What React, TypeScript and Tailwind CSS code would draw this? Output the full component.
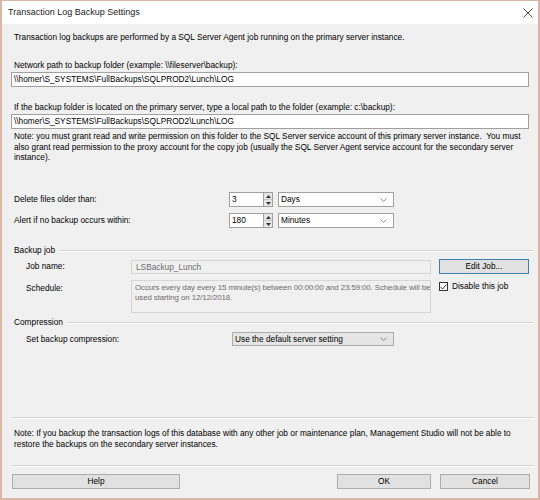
import React from "react";

const font = { fontFamily: '"Liberation Sans", Arial, sans-serif' };

function Chevron() {
    return (
        <svg width="7" height="4" viewBox="0 0 7 4" className="shrink-0">
            <polyline points="0.5,0.5 3.5,3.5 6.5,0.5" fill="none" stroke="#666" strokeWidth="0.7" />
        </svg>
    );
}

function Select({ value, className, grey }: { value: string; className: string; grey?: boolean }) {
    return (
        <div
            className={`${className} flex items-center justify-between border pl-[2px] pr-[6px] ${
                grey ? "bg-[#e5e5e5] border-[#acacac]" : "bg-white border-[#a0a0a0]"
            }`}
        >
            <span>{value}</span>
            <Chevron />
        </div>
    );
}

function Spin({ value }: { value: string }) {
    return (
        <div className="flex h-full w-[44px]">
            <div className="flex-1 bg-white border border-[#a0a0a0] border-r-0 pl-[2px] flex items-center">{value}</div>
            <div className="w-[10px] flex flex-col border border-[#a0a0a0] bg-[#f0f0f0]">
                <div className="flex-1 flex items-center justify-center border-b border-[#c8c8c8] bg-[#e6e6e6]">
                    <svg width="5" height="3" viewBox="0 0 5 3">
                        <polygon points="0,3 2.5,0 5,3" fill="#333" />
                    </svg>
                </div>
                <div className="flex-1 flex items-center justify-center bg-[#e6e6e6]">
                    <svg width="5" height="3" viewBox="0 0 5 3">
                        <polygon points="0,0 2.5,3 5,0" fill="#333" />
                    </svg>
                </div>
            </div>
        </div>
    );
}

function GroupHeader({ title }: { title: string }) {
    return (
        <div className="flex items-center h-[11px] ml-[3px] -mr-[5px]">
            <span className="leading-[11px]">{title}</span>
            <div className="flex-1 ml-[4px] h-[2px] border-t border-[#d5d5d5] border-b border-b-white" />
        </div>
    );
}

function Button({ label, className }: { label: string; className: string }) {
    return (
        <div className={`${className} h-[15px] flex items-center justify-center bg-[#e1e1e1] border border-[#adadad]`}>
            {label}
        </div>
    );
}

export default function App() {
    return (
        <div
            style={font}
            className="w-[540px] h-[500px] border-x-2 border-t border-b-2 border-[#dcb6a4] bg-[#f0f0f0] text-[8.3px] text-black flex flex-col overflow-hidden"
        >
            {/* title bar */}
            <div className="h-[23px] bg-white flex items-center justify-between pl-[6px] pr-[5px] shrink-0">
                <span className="text-[9px] text-[#222]">Transaction Log Backup Settings</span>
                <svg width="10" height="10" viewBox="0 0 10 10">
                    <path d="M0.5 0.5 L9.5 9.5 M9.5 0.5 L0.5 9.5" stroke="#333" strokeWidth="0.9" />
                </svg>
            </div>

            <div className="flex flex-col pl-[9px] pr-[9px]">
                <div className="mt-[8px] ml-[3px] leading-[11px]">
                    Transaction log backups are performed by a SQL Server Agent job running on the primary server instance.
                </div>

                <div className="mt-[17px] ml-[3px] leading-[11px]">Network path to backup folder (example: \\fileserver\backup):</div>
                <div className="mt-[1px] h-[15px] bg-white border border-[#a0a0a0] pl-[2px] flex items-center">
                    \\homer\S_SYSTEMS\FullBackups\SQLPROD2\Lunch\LOG
                </div>

                <div className="mt-[15px] ml-[3px] leading-[11px]">
                    If the backup folder is located on the primary server, type a local path to the folder (example: c:\backup):
                </div>
                <div className="mt-[1px] h-[15px] bg-white border border-[#a0a0a0] pl-[2px] flex items-center">
                    \\homer\S_SYSTEMS\FullBackups\SQLPROD2\Lunch\LOG
                </div>

                <div className="mt-[2px] ml-[3px] h-[32px] leading-[10.5px] pr-[4px]">
                    Note: you must grant read and write permission on this folder to the SQL Server service account of this primary server instance.&nbsp; You must also grant read permission to the proxy account for the copy job (usually the SQL Server Agent service account for the secondary server instance).
                </div>

                {/* retention */}
                <div className="mt-[29px] h-[15px] flex items-center">
                    <span className="ml-[3px] w-[215px]">Delete files older than:</span>
                    <Spin value="3" />
                    <Select value="Days" className="ml-[5px] w-[116px] h-full" />
                </div>
                <div className="mt-[6px] h-[15px] flex items-center">
                    <span className="ml-[3px] w-[215px]">Alert if no backup occurs within:</span>
                    <Spin value="180" />
                    <Select value="Minutes" className="ml-[5px] w-[116px] h-full" />
                </div>

                {/* backup job */}
                <div className="mt-[17px]">
                    <GroupHeader title="Backup job" />
                </div>
                <div className="mt-[3px] h-[15px] flex">
                    <span className="ml-[15px] w-[105px] flex items-center">Job name:</span>
                    <div className="mt-[1px] w-[300px] h-[14px] border border-[#d6d6d6] pl-[4px] flex items-center text-[#6d6d6d]">
                        LSBackup_Lunch
                    </div>
                    <div className="ml-[8px] flex-1 h-[15px] flex items-center justify-center bg-[#e1e1e1] border border-[#3f7fae]">
                        Edit Job...
                    </div>
                </div>
                <div className="mt-[6px] flex">
                    <span className="ml-[15px] w-[105px] mt-[3px] leading-[11px]">Schedule:</span>
                    <div className="w-[300px] h-[33px] border border-[#d6d6d6] pl-[3px] pt-[2px] text-[7.9px] leading-[10px] tracking-[-0.1px] whitespace-nowrap text-[#6d6d6d]">
                        Occurs every day every 15 minute(s) between 00:00:00 and 23:59:00. Schedule will be
                        <br />
                        used starting on 12/12/2018.
                    </div>
                    <div className="ml-[8px] mt-[2px] flex items-start gap-[4px]">
                        <div className="w-[9px] h-[9px] bg-white border border-[#333] flex items-center justify-center">
                            <svg width="7" height="6" viewBox="0 0 7 6">
                                <polyline points="0.6,3 2.6,5 6.4,0.6" fill="none" stroke="#222" strokeWidth="0.9" />
                            </svg>
                        </div>
                        <span className="leading-[9px]">Disable this job</span>
                    </div>
                </div>

                {/* compression */}
                <div className="mt-[4px]">
                    <GroupHeader title="Compression" />
                </div>
                <div className="mt-[4px] h-[14px] flex items-center">
                    <span className="ml-[15px] w-[206px]">Set backup compression:</span>
                    <Select value="Use the default server setting" className="w-[162px] h-full" grey />
                </div>

                <div className="mt-[71px] ml-[1px] -mr-[5px] h-[2px] border-t border-[#d5d5d5] border-b border-b-white" />

                <div className="mt-[9px] ml-[3px] h-[21px] leading-[10.5px] pr-[10px]">
                    Note: If you backup the transaction logs of this database with any other job or maintenance plan, Management Studio will not be able to restore the backups on the secondary server instances.
                </div>

                <div className="mt-[16px] ml-[1px] -mr-[5px] h-[2px] border-t border-[#d5d5d5] border-b border-b-white" />

                <div className="mt-[7px] flex ml-[1px] -mr-[1px]">
                    <Button label="Help" className="w-[168px]" />
                    <div className="flex-1" />
                    <Button label="OK" className="w-[94px]" />
                    <Button label="Cancel" className="ml-[9px] w-[90px]" />
                </div>
            </div>
        </div>
    );
}
